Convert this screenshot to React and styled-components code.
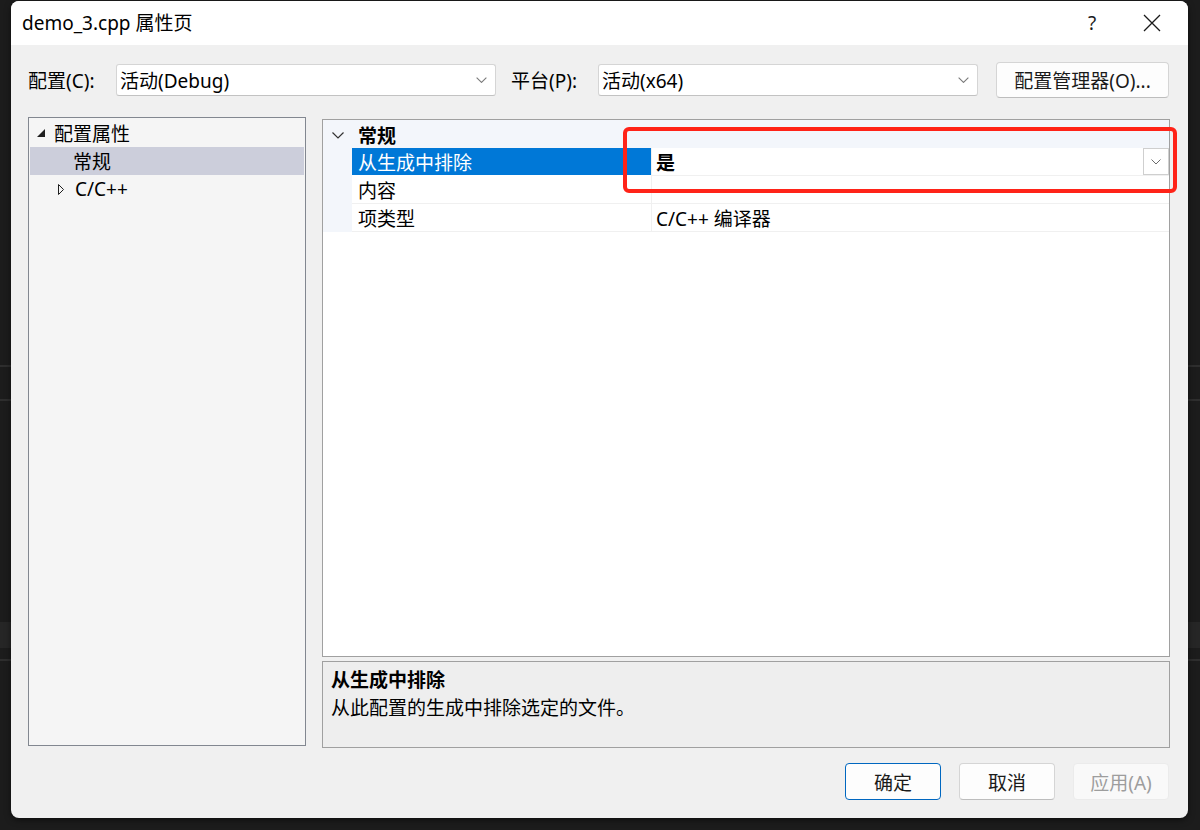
import React from "react";
import styled, { createGlobalStyle } from "styled-components";

const GlobalStyle = createGlobalStyle`
  html, body {
    margin: 0;
    padding: 0;
  }
  body {
    width: 1200px;
    height: 830px;
    overflow: hidden;
    background:
      linear-gradient(
        #1c1c1c 365px, #2e2e2e 365px, #2e2e2e 367px, #1c1c1c 367px,
        #1c1c1c 399px, #2e2e2e 399px, #2e2e2e 401px, #1c1c1c 401px,
        #1c1c1c 622px, #262626 622px, #262626 648px, #1c1c1c 648px,
        #1c1c1c 659px, #2e2e2e 659px, #2e2e2e 661px, #1c1c1c 661px
      );
    font-family: "Noto Sans", "Noto Sans CJK SC", sans-serif;
    font-size: 19px;
    color: #000;
  }
`;

const Desktop = styled.div`
  padding: 1px 12px 0 11px;
`;

const Window = styled.div`
  position: relative;
  width: 1177px;
  height: 817px;
  border-radius: 8px;
  overflow: hidden;
  background: #f0f0f0;
  display: flex;
  flex-direction: column;
  box-shadow: 0 2px 6px rgba(0, 0, 0, 0.5);
`;

const TitleBar = styled.div`
  height: 44px;
  flex: none;
  background: #ffffff;
  display: flex;
  align-items: center;
  padding: 0 0 0 11px;
`;

const Title = styled.div`
  flex: 1;
  line-height: 24px;
`;

const TitleButton = styled.div`
  width: ${(p) => p.$w}px;
  height: 44px;
  display: flex;
  align-items: center;
  justify-content: center;
  color: #1a1a1a;
  font-size: 19px;
`;

const Body = styled.div`
  flex: 1;
  display: flex;
  flex-direction: column;
  padding: 17px 18px 18px 17px;
`;

const ConfigRow = styled.div`
  height: 36px;
  display: flex;
  align-items: center;
`;

const Label = styled.div`
  width: ${(p) => p.$w}px;
  flex: none;
  white-space: nowrap;
`;

const Select = styled.div`
  width: ${(p) => p.$w}px;
  height: 32px;
  box-sizing: border-box;
  flex: none;
  display: flex;
  align-items: center;
  justify-content: space-between;
  padding: 0 8px 0 3px;
  background: #ffffff;
  border: 1px solid #d5d5d5;
  border-bottom-color: #c2c2c2;
  border-radius: 3px;
  margin-right: ${(p) => p.$mr || 0}px;
`;

const Button = styled.div`
  width: ${(p) => p.$w}px;
  height: ${(p) => p.$h}px;
  box-sizing: border-box;
  flex: none;
  display: flex;
  align-items: center;
  justify-content: center;
  border-radius: 4px;
  background: ${(p) => (p.$disabled ? "#f9f9f9" : "#fdfdfd")};
  color: ${(p) => (p.$disabled ? "#9d9d9d" : "#1a1a1a")};
  border: 1px solid
    ${(p) => (p.$primary ? "#0067c0" : p.$disabled ? "#ebebeb" : "#d5d5d5")};
  border-bottom-color: ${(p) =>
    p.$primary ? "#0067c0" : p.$disabled ? "#ebebeb" : "#bdbdbd"};
  white-space: nowrap;
`;

const Main = styled.div`
  margin-top: 19px;
  display: flex;
  gap: 16px;
  align-items: flex-start;
`;

const Tree = styled.div`
  width: 278px;
  height: 629px;
  box-sizing: border-box;
  flex: none;
  border: 1px solid #828790;
  background: #f5f5f5;
  padding: 1px;
`;

const TreeRow = styled.div`
  height: 28px;
  display: flex;
  align-items: center;
  padding-left: ${(p) => p.$indent}px;
  background: ${(p) => (p.$selected ? "#cccedb" : "transparent")};
`;

const TreeIcon = styled.span`
  width: 17px;
  flex: none;
  display: flex;
  align-items: center;
`;

const RightColumn = styled.div`
  flex: 1;
  height: 629px;
  margin-top: 2px;
  display: flex;
  flex-direction: column;
  gap: 4px;
`;

const PropGrid = styled.div`
  flex: 1;
  border: 1px solid #a0a0a0;
  background: #ffffff;
`;

const CategoryRow = styled.div`
  height: 28px;
  display: flex;
  align-items: center;
  background: #f3f6fb;
  font-weight: bold;
  padding-top: 2px;
  box-sizing: border-box;
`;

const Gutter = styled.div`
  width: 29px;
  flex: none;
  align-self: stretch;
  display: flex;
  align-items: center;
  justify-content: center;
  background: #f3f6fb;
`;

const CategoryTitle = styled.span`
  padding-left: 6px;
`;

const PropRow = styled.div`
  height: 28px;
  display: flex;
`;

const NameCell = styled.div`
  width: 299px;
  flex: none;
  box-sizing: border-box;
  display: flex;
  align-items: center;
  padding-left: 6px;
  background: ${(p) => (p.$selected ? "#0078d7" : "#ffffff")};
  color: ${(p) => (p.$selected ? "#ffffff" : "#000000")};
  border-bottom: 1px solid ${(p) => (p.$selected ? "#ffffff" : "#f0f0f0")};
  padding-top: 1px;
`;

const ValueCell = styled.div`
  flex: 1;
  box-sizing: border-box;
  display: flex;
  align-items: center;
  justify-content: space-between;
  padding: 1px 0 0 4px;
  border-left: 1px solid #f0f0f0;
  border-bottom: 1px solid #f0f0f0;
  font-weight: ${(p) => (p.$bold ? "bold" : "normal")};
`;

const DropButton = styled.div`
  width: 26px;
  height: 27px;
  box-sizing: border-box;
  margin-top: -1px;
  border: 1px solid #cfcfcf;
  background: #ffffff;
  display: flex;
  align-items: center;
  justify-content: center;
`;

const Description = styled.div`
  height: 87px;
  flex: none;
  box-sizing: border-box;
  border: 1px solid #a0a0a0;
  background: #eeeeee;
  padding: 4px 8px;
  line-height: 28px;
`;

const DescTitle = styled.div`
  font-weight: bold;
`;

const Footer = styled.div`
  margin-top: 15px;
  padding-right: 1px;
  display: flex;
  justify-content: flex-end;
  gap: 18px;
`;

const Highlight = styled.div`
  position: absolute;
  left: 612px;
  top: 126px;
  width: 554px;
  height: 66px;
  box-sizing: border-box;
  border: 4px solid #ff2318;
  border-radius: 6px;
  pointer-events: none;
`;

const Chevron = ({ size = 10, color = "#6b6b6b" }) => (
  <svg width={size} height={size / 2 + 1} viewBox="0 0 10 6">
    <polyline points="0.5,0.5 5,5 9.5,0.5" fill="none" stroke={color} strokeWidth="1" />
  </svg>
);

export default function App() {
  return (
    <>
      <GlobalStyle />
      <Desktop>
        <Window>
          <TitleBar>
            <Title>demo_3.cpp 属性页</Title>
            <TitleButton $w={48}>?</TitleButton>
            <TitleButton $w={72}>
              <svg width="18" height="18" viewBox="0 0 18 18">
                <path d="M1 1 L17 17 M17 1 L1 17" stroke="#1a1a1a" strokeWidth="1.3" />
              </svg>
            </TitleButton>
          </TitleBar>
          <Body>
            <ConfigRow>
              <Label $w={88}>配置(C):</Label>
              <Select $w={380} $mr={15}>
                <span>活动(Debug)</span>
                <Chevron size={11} color="#7a7a7a" />
              </Select>
              <Label $w={87}>平台(P):</Label>
              <Select $w={380} $mr={18}>
                <span>活动(x64)</span>
                <Chevron size={11} color="#7a7a7a" />
              </Select>
              <Button $w={173} $h={36}>配置管理器(O)...</Button>
            </ConfigRow>
            <Main>
              <Tree>
                <TreeRow $indent={7}>
                  <TreeIcon>
                    <svg width="8" height="8" viewBox="0 0 8 8">
                      <polygon points="8,0 8,8 0,8" fill="#1e1e1e" />
                    </svg>
                  </TreeIcon>
                  配置属性
                </TreeRow>
                <TreeRow $indent={43} $selected>常规</TreeRow>
                <TreeRow $indent={28}>
                  <TreeIcon>
                    <svg width="6" height="11" viewBox="0 0 6 11">
                      <polygon points="0.5,0.5 5.5,5.5 0.5,10.5" fill="none" stroke="#1e1e1e" strokeWidth="1" />
                    </svg>
                  </TreeIcon>
                  C/C++
                </TreeRow>
              </Tree>
              <RightColumn>
                <PropGrid>
                  <CategoryRow>
                    <Gutter>
                      <svg width="12" height="7" viewBox="0 0 12 7">
                        <polyline points="0.5,0.5 6,6 11.5,0.5" fill="none" stroke="#333" strokeWidth="1.2" />
                      </svg>
                    </Gutter>
                    <CategoryTitle>常规</CategoryTitle>
                  </CategoryRow>
                  <PropRow>
                    <Gutter />
                    <NameCell $selected>从生成中排除</NameCell>
                    <ValueCell $bold>
                      <span>是</span>
                      <DropButton>
                        <Chevron size={10} color="#6b6b6b" />
                      </DropButton>
                    </ValueCell>
                  </PropRow>
                  <PropRow>
                    <Gutter />
                    <NameCell>内容</NameCell>
                    <ValueCell />
                  </PropRow>
                  <PropRow>
                    <Gutter />
                    <NameCell>项类型</NameCell>
                    <ValueCell>C/C++ 编译器</ValueCell>
                  </PropRow>
                </PropGrid>
                <Description>
                  <DescTitle>从生成中排除</DescTitle>
                  <div>从此配置的生成中排除选定的文件。</div>
                </Description>
              </RightColumn>
            </Main>
            <Footer>
              <Button $w={96} $h={37} $primary>确定</Button>
              <Button $w={96} $h={37}>取消</Button>
              <Button $w={96} $h={37} $disabled>应用(A)</Button>
            </Footer>
          </Body>
          <Highlight />
        </Window>
      </Desktop>
    </>
  );
}
